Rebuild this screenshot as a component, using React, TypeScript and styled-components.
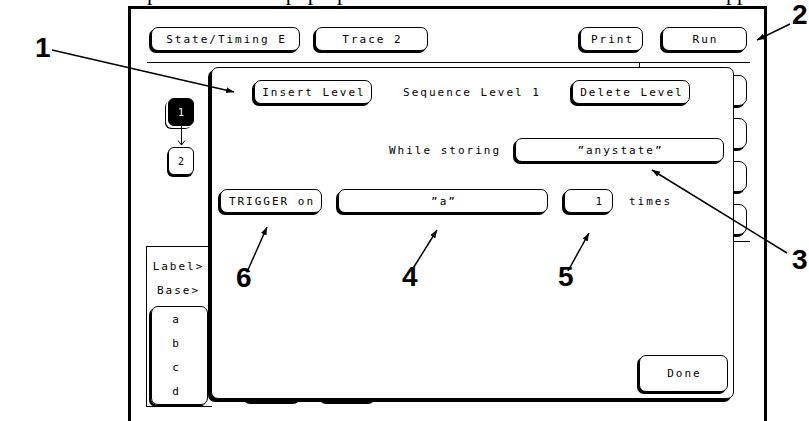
import React from 'react';
import styled, { createGlobalStyle } from 'styled-components';

const MONO = `"DejaVu Sans Mono", "Liberation Mono", monospace`;

const GlobalStyle = createGlobalStyle`
  html, body {
    margin: 0;
    padding: 0;
    background: #fff;
  }
  body {
    width: 809px;
    height: 421px;
    overflow: hidden;
  }
`;

const Page = styled.div`
  position: relative;
  width: 809px;
  height: 421px;
  overflow: hidden;
  background: #fff;
  color: #000;
  font-family: ${MONO};
  font-size: 11px;
  letter-spacing: 2px;
`;

// bottom of the manual's text line above the figure, cut off by the crop
const PrevLine = styled.div`
  display: flex;
  height: 6px;
  overflow: hidden;
  font-family: "Liberation Serif", "Times New Roman", serif;
  font-size: 22px;
  letter-spacing: 0;
  white-space: pre;
`;

const PrevText = styled.span<{ $left: number }>`
  margin-left: ${(p) => p.$left}px;
  margin-top: -18px;
  line-height: 22px;
`;

const Screen = styled.div`
  box-sizing: border-box;
  margin-left: 128px;
  width: 639px;
  height: 415px;
  border: 3px solid #000;
  border-bottom: none;
  display: flex;
  flex-direction: column;
`;

const TopBar = styled.div`
  display: flex;
  align-items: flex-start;
  padding: 18px 17px 0 20px;
`;

const KeyGroup = styled.div<{ $gap: number }>`
  display: flex;
  gap: ${(p) => p.$gap}px;
`;

const Spacer = styled.div`
  flex: 1;
`;

const Key = styled.div<{ $w: number; $h?: number; $align?: 'center' | 'right' }>`
  box-sizing: border-box;
  flex: none;
  width: ${(p) => p.$w}px;
  height: ${(p) => p.$h ?? 24}px;
  border: 1px solid #000;
  border-radius: 7px;
  box-shadow: -2px 2px 0 #000;
  background: #fff;
  display: flex;
  align-items: center;
  justify-content: ${(p) => (p.$align === 'right' ? 'flex-end' : 'center')};
  padding: ${(p) => (p.$align === 'right' ? '0 8px 0 0' : '0 0 0 2px')};
  white-space: pre;
`;

const Rule = styled.div`
  margin: 11px 14px 0 16px;
  border-top: 1px solid #000;
`;

const Body = styled.div`
  flex: 1;
  display: flex;
  min-height: 0;
`;

const LeftColumn = styled.div`
  width: 66px;
  margin-left: 15px;
  display: flex;
  flex-direction: column;
  padding-top: 35px;
`;

const NodeStack = styled.div`
  width: 26px;
  margin-left: 22px;
  display: flex;
  flex-direction: column;
  align-items: center;
`;

const Node = styled.div<{ $active?: boolean }>`
  box-sizing: border-box;
  width: 26px;
  height: 28px;
  border: 1px solid #000;
  border-radius: 6px;
  display: flex;
  align-items: center;
  justify-content: center;
  padding-left: 2px;
  font-size: 10px;
  background: ${(p) => (p.$active ? '#000' : '#fff')};
  color: ${(p) => (p.$active ? '#fff' : '#000')};
  box-shadow: ${(p) =>
    p.$active ? '-2px 2px 0 0 #fff, -3px 3px 0 0 #000' : '-1px 2px 0 #000'};
`;

const LabelBox = styled.div`
  box-sizing: border-box;
  width: 66px;
  margin-top: 71px;
  border: 1px solid #000;
  border-right: none;
  padding: 8px 4px 1px 0;
`;

const LabelRow = styled.div`
  height: 24px;
  line-height: 24px;
  text-align: center;
  padding-left: 2px;
`;

const ValueBox = styled.div`
  box-sizing: border-box;
  width: 57px;
  margin: 3px 0 0 4px;
  border: 1px solid #000;
  border-radius: 7px;
  box-shadow: -2px 2px 0 #000;
  padding: 1px 8px 0 0;
`;

const Center = styled.div`
  flex: 1;
  display: flex;
  align-items: flex-start;
`;

const WaveArea = styled.div`
  align-self: stretch;
  width: 427px;
  display: flex;
  align-items: flex-end;
  gap: 19px;
  padding: 0 0 19px 33px;
  box-sizing: border-box;
`;

// top of the divider that runs down behind the pop-up
const Tick = styled.div`
  width: 1px;
  height: 5px;
  background: #000;
`;

const RightColumn = styled.div`
  width: 60px;
  margin-right: 14px;
  padding-top: 12px;
  display: flex;
  flex-direction: column;
  gap: 12px;
`;

const Tab = styled.div`
  box-sizing: border-box;
  width: 57px;
  height: 31px;
  border: 1px solid #000;
  border-radius: 8px;
  box-shadow: -2px 2px 0 #000;
  background: #fff;
`;

const TabRule = styled.div`
  margin-top: -6px;
  border-top: 1px solid #000;
`;

const Popup = styled.div`
  position: absolute;
  left: 211px;
  top: 67px;
  box-sizing: border-box;
  width: 523px;
  height: 332px;
  border: 1px solid #000;
  border-radius: 7px;
  box-shadow: -3px 3px 0 #000;
  background: #fff;
  display: flex;
  flex-direction: column;
`;

const PopupRow = styled.div<{ $top: number; $left?: number; $right?: number; $gap?: number; $end?: boolean }>`
  display: flex;
  align-items: center;
  justify-content: ${(p) => (p.$end ? 'flex-end' : 'flex-start')};
  margin-top: ${(p) => p.$top}px;
  padding-left: ${(p) => p.$left ?? 0}px;
  padding-right: ${(p) => p.$right ?? 0}px;
  gap: ${(p) => p.$gap ?? 0}px;
`;

const Title = styled.div`
  width: 200px;
  text-align: center;
  white-space: pre;
`;

const Caption = styled.span`
  white-space: pre;
`;

const DoneRow = styled.div`
  margin-top: auto;
  display: flex;
  justify-content: flex-end;
  padding: 0 5px 6px 0;
`;

const Overlay = styled.svg`
  position: absolute;
  left: 0;
  top: 0;
  pointer-events: none;
`;

const Callout = styled.span<{ $x: number; $y: number }>`
  position: absolute;
  left: ${(p) => p.$x}px;
  top: ${(p) => p.$y}px;
  font-family: "Liberation Sans", Arial, sans-serif;
  font-weight: bold;
  font-size: 28px;
  line-height: 22px;
  letter-spacing: 0;
`;

const leaders = [
  { n: '1', x: 35, y: 37, from: [52, 50], to: [234, 92] },
  { n: '2', x: 792, y: 4, from: [790, 24], to: [757, 40] },
  { n: '3', x: 792, y: 249, from: [787, 253], to: [652, 170] },
  { n: '4', x: 402, y: 266, from: [412, 270], to: [437, 230] },
  { n: '5', x: 558, y: 266, from: [568, 271], to: [589, 233] },
  { n: '6', x: 236, y: 267, from: [247, 272], to: [267, 227] },
];

const DownArrow = () => (
  <svg width="9" height="21" viewBox="0 0 9 21">
    <path d="M4.5 0 V19 M1 14.5 L4.5 19 L8 14.5" fill="none" stroke="#000" strokeWidth="1" />
  </svg>
);

export default function App() {
  return (
    <>
      <GlobalStyle />
      <Page>
        <PrevLine>
          <PrevText $left={147}>press the Level pop-up</PrevText>
          <PrevText $left={119}>then a new Level menu that appears</PrevText>
        </PrevLine>

        <Screen>
          <TopBar>
            <KeyGroup $gap={15}>
              <Key $w={149}>State/Timing E</Key>
              <Key $w={113}>Trace 2</Key>
            </KeyGroup>
            <Spacer />
            <KeyGroup $gap={19}>
              <Key $w={63}>Print</Key>
              <Key $w={85}>Run</Key>
            </KeyGroup>
          </TopBar>
          <Rule />

          <Body>
            <LeftColumn>
              <NodeStack>
                <Node $active>1</Node>
                <DownArrow />
                <Node>2</Node>
              </NodeStack>
              <LabelBox>
                <LabelRow>Label&gt;</LabelRow>
                <LabelRow>Base&gt;</LabelRow>
                <ValueBox>
                  {['a', 'b', 'c', 'd'].map((v) => (
                    <LabelRow key={v}>{v}</LabelRow>
                  ))}
                </ValueBox>
              </LabelBox>
            </LeftColumn>

            <Center>
              <WaveArea>
                <Key $w={57} />
                <Key $w={56} />
              </WaveArea>
              <Tick />
            </Center>

            <RightColumn>
              <Tab />
              <Tab />
              <Tab />
              <Tab />
              <TabRule />
            </RightColumn>
          </Body>
        </Screen>

        <Popup>
          <PopupRow $top={12} $left={42}>
            <Key $w={118}>Insert Level</Key>
            <Title>Sequence Level 1</Title>
            <Key $w={118}>Delete Level</Key>
          </PopupRow>
          <PopupRow $top={34} $right={9} $gap={14} $end>
            <Caption>While storing</Caption>
            <Key $w={209}>”anystate”</Key>
          </PopupRow>
          <PopupRow $top={27} $left={8} $gap={16}>
            <Key $w={102}>TRIGGER on</Key>
            <Key $w={210}>”a”</Key>
            <Key $w={49} $align="right">1</Key>
            <Caption>times</Caption>
          </PopupRow>
          <DoneRow>
            <Key $w={89} $h={37}>Done</Key>
          </DoneRow>
        </Popup>

        <Overlay width="809" height="421" viewBox="0 0 809 421">
          <defs>
            <marker
              id="head"
              markerUnits="userSpaceOnUse"
              markerWidth="8"
              markerHeight="6"
              viewBox="0 0 8 6"
              refX="8"
              refY="3"
              orient="auto"
            >
              <path d="M0 0 L8 3 L0 6 Z" fill="#000" />
            </marker>
          </defs>
          {leaders.map((l) => (
            <line
              key={l.n}
              x1={l.from[0]}
              y1={l.from[1]}
              x2={l.to[0]}
              y2={l.to[1]}
              stroke="#000"
              strokeWidth="1.5"
              markerEnd="url(#head)"
            />
          ))}
        </Overlay>
        {leaders.map((l) => (
          <Callout key={l.n} $x={l.x} $y={l.y}>
            {l.n}
          </Callout>
        ))}
      </Page>
    </>
  );
}
